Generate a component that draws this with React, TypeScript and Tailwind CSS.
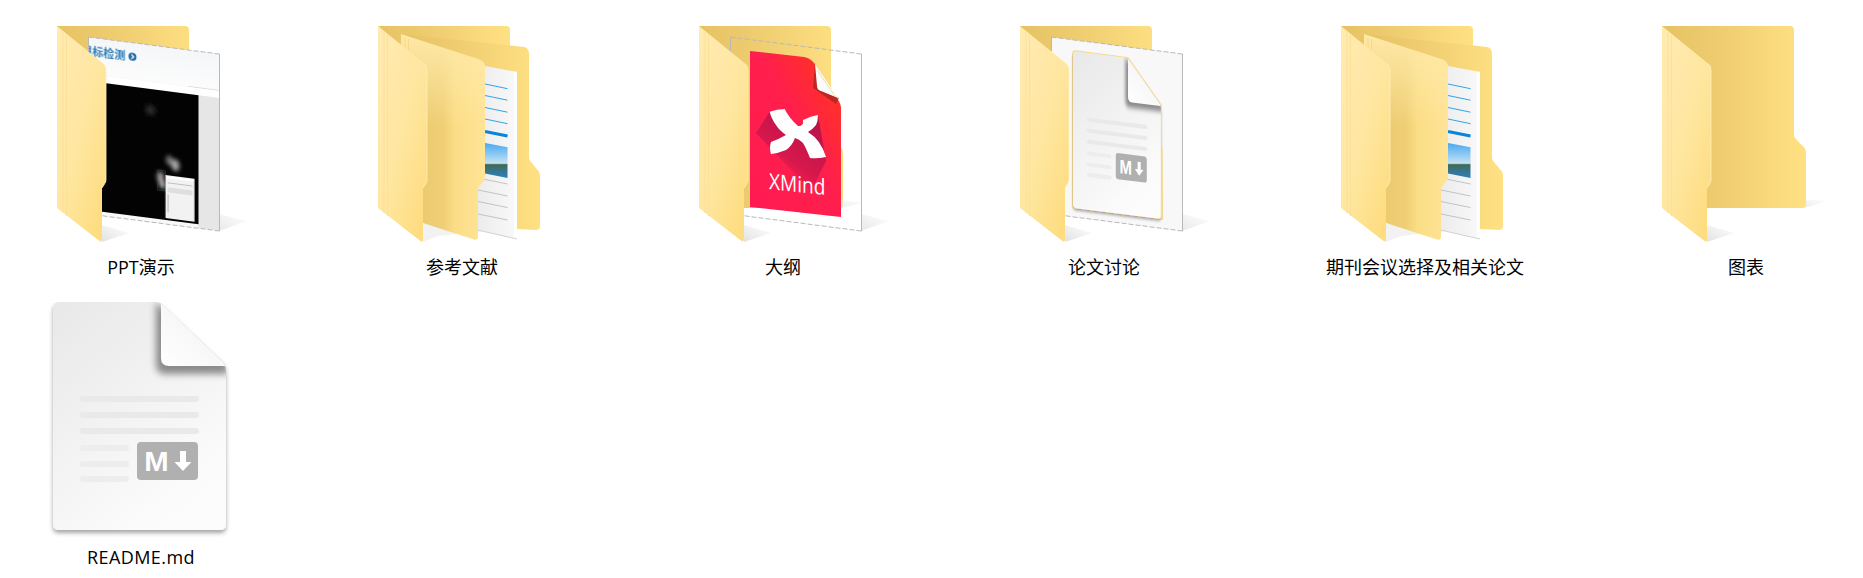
import React from "react";

const FLAP = "M0 0 L45.5 37 Q49 40 49 44 L49 154 Q49 156 47.5 158 L45 162 L45 213.5 Q45 216.5 42.5 215 L0 182 Z";
const BACK = "M0 0 L128 0 Q132 0 132 4 L132 109 Q132 111 133.5 112.5 L142.5 122 Q144 124 144 126 L144 178 Q144 182 140 182 L30 182 Z";
const DOC = "M6 0 L103 0 Q107 0 110 3 L170 60 Q173 63 173 69 L173 222 Q173 228 167 228 L6 228 Q0 228 0 222 L0 6 Q0 0 6 0 Z";

function Defs() {
  return (
    <svg className="absolute w-0 h-0" aria-hidden="true">
      <defs>
        <linearGradient id="backG" x1="0" y1="0" x2="1" y2="0">
          <stop offset="0" stopColor="#e6c263" />
          <stop offset="0.35" stopColor="#edcb6e" />
          <stop offset="1" stopColor="#ffe184" />
        </linearGradient>
        <linearGradient id="flapG" x1="0" y1="0.1" x2="0.75" y2="1">
          <stop offset="0" stopColor="#ffeab0" />
          <stop offset="0.5" stopColor="#ffe7a2" />
          <stop offset="1" stopColor="#fedd82" />
        </linearGradient>
        <linearGradient id="midG" x1="0" y1="0" x2="1" y2="0">
          <stop offset="0" stopColor="#e8c569" />
          <stop offset="0.5" stopColor="#efcf76" />
          <stop offset="0.64" stopColor="#fbdd86" />
          <stop offset="1" stopColor="#ffe496" />
        </linearGradient>
        <linearGradient id="midTop" x1="0" y1="0" x2="0" y2="1">
          <stop offset="0" stopColor="#ffe9a8" stopOpacity="1" />
          <stop offset="0.25" stopColor="#ffe9a8" stopOpacity="0.45" />
          <stop offset="0.45" stopColor="#ffe9a8" stopOpacity="0" />
        </linearGradient>
        <linearGradient id="shadeG" x1="0" y1="1" x2="1" y2="0">
          <stop offset="0" stopColor="#d6d6d6" />
          <stop offset="1" stopColor="#ffffff" />
        </linearGradient>
        <linearGradient id="docG" x1="0" y1="0" x2="0.6" y2="1">
          <stop offset="0" stopColor="#e8e8e8" />
          <stop offset="1" stopColor="#fcfcfc" />
        </linearGradient>
        <linearGradient id="foldG" x1="0" y1="1" x2="1" y2="0">
          <stop offset="0" stopColor="#ffffff" />
          <stop offset="0.55" stopColor="#f6f6f6" />
          <stop offset="1" stopColor="#d4d4d4" />
        </linearGradient>
        <linearGradient id="redG" x1="0" y1="1" x2="1" y2="0">
          <stop offset="0" stopColor="#ff1a52" />
          <stop offset="0.55" stopColor="#ff1f4c" />
          <stop offset="1" stopColor="#ff3a16" />
        </linearGradient>
        <linearGradient id="longG" x1="0.75" y1="0.15" x2="0.25" y2="0.95">
          <stop offset="0" stopColor="#b8134a" stopOpacity="0.95" />
          <stop offset="0.55" stopColor="#c8164c" stopOpacity="0.75" />
          <stop offset="1" stopColor="#ff1a52" stopOpacity="0" />
        </linearGradient>
        <linearGradient id="pageG" x1="0" y1="0" x2="1" y2="0">
          <stop offset="0" stopColor="#ececec" />
          <stop offset="1" stopColor="#f9f9f9" />
        </linearGradient>
        <linearGradient id="skyG" x1="0" y1="0" x2="0" y2="1">
          <stop offset="0" stopColor="#4aa8f0" />
          <stop offset="0.45" stopColor="#a8d6f5" />
          <stop offset="0.58" stopColor="#c6e2f2" />
          <stop offset="0.62" stopColor="#3f6a4c" />
          <stop offset="0.7" stopColor="#3c6f72" />
          <stop offset="1" stopColor="#2a80c4" />
        </linearGradient>
        <linearGradient id="headG" x1="0" y1="0" x2="0" y2="1">
          <stop offset="0" stopColor="#f4f6f8" />
          <stop offset="1" stopColor="#fcfcfc" />
        </linearGradient>
        <filter id="blur0" x="-20%" y="-20%" width="140%" height="140%">
          <feGaussianBlur stdDeviation="0.35" />
        </filter>
        <filter id="blur1" x="-50%" y="-50%" width="200%" height="200%">
          <feGaussianBlur stdDeviation="2" />
        </filter>
        <filter id="blur3" x="-50%" y="-50%" width="200%" height="200%">
          <feGaussianBlur stdDeviation="3.5" />
        </filter>
        <filter id="docShadow" x="-10%" y="-10%" width="120%" height="120%">
          <feDropShadow dx="0" dy="3" stdDeviation="2" floodColor="#000" floodOpacity="0.35" />
        </filter>
        <clipPath id="pageClip">
          <rect x="0" y="0" width="131" height="177" />
        </clipPath>
        <clipPath id="docClip">
          <path d={DOC} />
        </clipPath>
      </defs>
    </svg>
  );
}

function Flap() {
  return (
    <g>
      <path d={FLAP} fill="url(#flapG)" />
      <path d="M6 6 L6 187 M9.5 9 L9.5 190" stroke="#fbe097" strokeWidth="1" />
      <path d="M46 37.5 Q49 40 49 44 L49 154 Q49 156 47.5 158 L45 162" fill="none" stroke="#fff0c0" strokeWidth="0.8" />
    </g>
  );
}

function Back() {
  return <path d={BACK} fill="url(#backG)" />;
}

function FloorShadow() {
  return <path d="M45 216 L45 199 L72 207 Z" fill="url(#shadeG)" opacity="0.7" />;
}

function PageShadow() {
  return <path d="M162 205 L162 188 L190 195 Z" fill="url(#shadeG)" opacity="0.55" />;
}

function PageEdges() {
  return (
    <g fill="none" stroke="#b8b8b8" strokeWidth="1">
      <path d="M0 0 L131 0" strokeDasharray="5 2" />
      <path d="M131 0 L131 177" />
      <path d="M0 177 L131 177" strokeDasharray="5 2" />
      <path d="M0 0 L0 14" />
    </g>
  );
}

const PAGE_M = "matrix(1 0.13 0 1 31.5 11)";

function MdDoc() {
  const bars = [94, 110, 126];
  const shorts = [143, 159, 174];
  return (
    <g>
      <path d={DOC} fill="url(#docG)" filter="url(#docShadow)" />
      <g clipPath="url(#docClip)">
        <path d="M103 0 L175 62 L175 72 L112 72 Q103 72 103 62 Z" fill="#444444" opacity="0.6" filter="url(#blur3)" />
        <path d="M108 -3 L180 64 L116 64 Q108 64 108 56 Z" fill="url(#foldG)" />
      </g>
      {bars.map((y) => (
        <rect key={y} x="27" y={y} width="119" height="6" rx="3" fill="#e9e9e9" />
      ))}
      {shorts.map((y) => (
        <rect key={y} x="27" y={y} width="49" height="6" rx="3" fill="#ededed" />
      ))}
      <rect x="84" y="140" width="61" height="38" rx="4" fill="#b0b0b0" />
      <text
        transform="matrix(1.03 0 0 1 91.2 169)"
        fontFamily="'Liberation Sans', sans-serif"
        fontWeight="700"
        fontSize="28.5"
        fill="#ffffff"
      >
        M
      </text>
      <path d="M127 149 H133 V160 H138.5 L130 169 L121.5 160 H127 Z" fill="#ffffff" />
    </g>
  );
}

function PlainFolder() {
  return (
    <>
      <path d="M142 182 L122 182 L122 172 L165 175 Z" fill="url(#shadeG)" opacity="0.6" />
      <Back />
      <FloorShadow />
      <Flap />
    </>
  );
}

function ScreenshotFolder() {
  return (
    <>
      <Back />
      <PageShadow />
      <FloorShadow />
      <g transform={PAGE_M}>
        <g clipPath="url(#pageClip)">
          <rect width="131" height="177" fill="#f8f8f8" />
          <rect width="131" height="36" fill="url(#headG)" />
          <rect x="100" y="36" width="31" height="1" fill="#dcdcdc" />
          <rect y="37" width="131" height="7" fill="#ffffff" />
          <rect x="110" y="44" width="21" height="133" fill="#e6e6e6" />
          <rect x="10" y="44" width="100" height="129" fill="#030303" />
          <g filter="url(#blur1)">
            <circle cx="62" cy="65" r="5" fill="#2c2c2c" />
            <ellipse cx="81" cy="113" rx="3.5" ry="5" fill="#777" />
            <ellipse cx="87" cy="117" rx="4" ry="6" fill="#a8a8a8" />
            <ellipse cx="72" cy="131" rx="3.5" ry="6" fill="#a0a0a0" />
            <ellipse cx="74" cy="138" rx="3" ry="4" fill="#bbb" />
          </g>
          <rect x="57" y="59" width="12" height="13" fill="none" stroke="#2c3f2c" strokeWidth="0.3" strokeDasharray="1 5" />
          <rect x="69" y="124" width="8" height="20" fill="none" stroke="#2e6a2e" strokeWidth="0.4" />
          <g filter="url(#blur0)">
            <rect x="77" y="128" width="29" height="43" fill="#f2f2f2" />
            <rect x="78" y="129" width="27" height="2" fill="#ffffff" />
            <rect x="79" y="135" width="25" height="1" fill="#bdbdbd" />
            <rect x="79" y="140" width="25" height="5" fill="#dedede" />
            <rect x="79" y="147" width="1" height="18" fill="#b0b0b0" />
            <text x="-7" y="18" fontFamily="'Noto Sans CJK SC', sans-serif" fontWeight="700" fontSize="11" fill="#2a7ab5">
              目标检测
            </text>
            <circle cx="44" cy="14" r="4" fill="#1f6fae" />
            <path d="M43 11.8 L45.2 14 L43 16.2" fill="none" stroke="#ffffff" strokeWidth="1.1" />
          </g>
        </g>
        <PageEdges />
      </g>
      <Flap />
    </>
  );
}

function DoubleFolder() {
  const mid =
    "M23 8 L100 33 Q107 35 107 41 L107 151 Q107 153 105.5 155 L100 162 L100 210.5 Q100 214.5 96 213.5 L45 197 L23 180 Z";
  return (
    <>
      <path d="M0 0 L128 0 Q132 0 132 4 L132 40 L23 40 Z" fill="url(#backG)" />
      <path
        d="M23 8 L146 21 Q151 22 151 28 L151 132 Q151 134 153 136 L160.5 145 Q162 147 162 149 L162 200 Q162 204 158 204 L139 203 L60 190 Z"
        fill="url(#backG)"
      />
      <path d="M45 198 L45 216 L60 210 L107 205 L60 193 Z" fill="#f2f2f2" />
      <path d="M100 36 L107 40 L139 46 L139 213 L100 204 Z" fill="url(#pageG)" />
      <path d="M136 45.5 L139 46 L139 213 L136 212.4 Z" fill="#ffffff" />
      <path d="M100 204.2 L139 213" stroke="#c8c8c8" strokeWidth="0.8" />
      <g fill="none" stroke="#2fa4ec" strokeWidth="1">
        <path d="M107 58 L129.5 62.7" />
        <path d="M107 69.5 L129.5 74.2" />
        <path d="M107 81.5 L129.5 86.2" />
        <path d="M107 93 L129.5 97.7" />
      </g>
      <path d="M107 105.5 L129.5 110" stroke="#0a84d8" strokeWidth="3" />
      <path d="M107 117 L129.5 121.3 L129.5 152 L107 147.5 Z" fill="url(#skyG)" />
      <g fill="none" stroke="#bdbdbd" strokeWidth="0.9">
        <path d="M100 152 L129.5 158" />
        <path d="M100 164 L129.5 170" />
        <path d="M100 175.5 L129.5 181.5" />
        <path d="M100 188 L129.5 194" />
      </g>
      <path d={mid} fill="url(#midG)" />
      <path d={mid} fill="url(#midTop)" />
      <path d="M27 12 L27 50 M30.5 13 L30.5 50" stroke="#f7d987" strokeWidth="1" />
      <Flap />
    </>
  );
}

function XMindFolder() {
  return (
    <>
      <Back />
      <path d="M143 182 L122 182 L122 170 L163 177 Z" fill="url(#shadeG)" opacity="0.5" />
      <PageShadow />
      <FloorShadow />
      <g transform={PAGE_M}>
        <PageEdges />
      </g>
      <path d="M51 25 L105 31 Q111 32 115 37 L138 72 Q142 78 142 82 L142 191 L51 181 Z" fill="url(#redG)" />
      <path d="M70.7 85.7 L57 107 L112 165 L127 135 L119 89 L99 100 Z" fill="url(#longG)" />
      <path
        d="M70.7 85.7 Q78 83 85.7 83 Q90 92 99 100 Q105 100 104 94 Q112 90 119 89 Q119 95 117 99 Q113 104 109 106 Q122 114 127 131 Q118 133 111 132 Q107 122 104 117 Q100 113 96 112 Q93 120 87 124 Q80 127 72 128 Q70 122 72 116 Q80 113 87 109 Q80 104 77 99 Q72 92 70.7 85.7 Z"
        fill="#ffffff"
      />
      <text
        transform="matrix(0.87 0.09 0 1 70 163)"
        fontFamily="'Open Sans', sans-serif"
        fontWeight="400"
        fontSize="22"
        fill="#ffffff"
      >
        XMind
      </text>
      <path d="M116 36 L119 60 L140 72 L137 78 L114 62 Z" fill="#8a2018" opacity="0.55" filter="url(#blur0)" />
      <path d="M116 38 L139 72 L122 65 Q118 64 118 60 Z" fill="#fbfbfb" />
      <path d="M118 44 L136 70" stroke="#f3dfa2" strokeWidth="1" />
      <Flap />
    </>
  );
}

function MdFolder() {
  return (
    <>
      <Back />
      <PageShadow />
      <FloorShadow />
      <g transform={PAGE_M}>
        <rect width="131" height="177" fill="#f8f8f8" />
        <PageEdges />
      </g>
      <path d="M142.5 122 L142.5 191 L139 191 L139 122 Z" fill="#fddf87" />
      <path d="M55 25 L108 32 L141 79 L142 193 L55 182 Q53 182 53 180 L53 27 Q53 25 55 25 Z" fill="none" stroke="#fdd97e" strokeWidth="1.4" />
      <g transform="matrix(0.509 0.0636 0 0.689 53 25)">
        <MdDoc />
      </g>
      <Flap />
    </>
  );
}

const items: { label: string; Icon: () => React.ReactElement }[] = [
  { label: "PPT演示", Icon: ScreenshotFolder },
  { label: "参考文献", Icon: DoubleFolder },
  { label: "大纲", Icon: XMindFolder },
  { label: "论文讨论", Icon: MdFolder },
  { label: "期刊会议选择及相关论文", Icon: DoubleFolder },
  { label: "图表", Icon: PlainFolder },
];

function Cell({ label, wide, children }: { label: string; wide?: boolean; children: React.ReactNode }) {
  return (
    <div className="flex flex-col items-center h-[270px]">
      <svg width="230" height="240" viewBox="0 0 230 240" className="block shrink-0">
        {children}
      </svg>
      <div
        className={
          wide
            ? "h-[30px] leading-[30px] text-[18px] tracking-[0.4px] text-black whitespace-nowrap font-['Open_Sans','Noto_Sans_CJK_SC',sans-serif]"
            : "h-[30px] leading-[30px] text-[18px] text-black whitespace-nowrap font-['Open_Sans','Noto_Sans_CJK_SC',sans-serif]"
        }
      >
        {label}
      </div>
    </div>
  );
}

export default function App() {
  return (
    <div className="relative w-[1863px] h-[578px] overflow-hidden bg-white pl-[26px] pt-[12px]">
      <Defs />
      <div className="grid grid-cols-[repeat(6,230px)] gap-x-[91px] gap-y-[20px]">
        {items.map(({ label, Icon }) => (
          <Cell key={label} label={label}>
            <g transform="translate(31 14)">
              <Icon />
            </g>
          </Cell>
        ))}
        <Cell label="README.md" wide>
          <g transform="translate(27 0)">
            <MdDoc />
          </g>
        </Cell>
      </div>
    </div>
  );
}
